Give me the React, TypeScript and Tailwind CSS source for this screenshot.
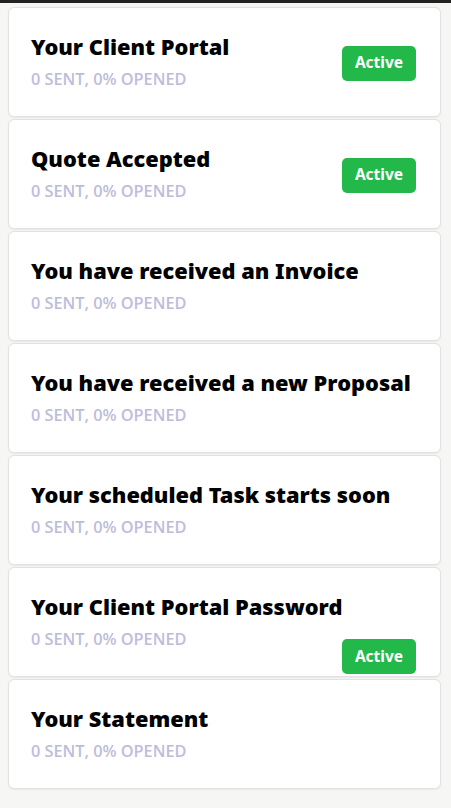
const items = [
  { title: "Your Client Portal", badge: "center" },
  { title: "Quote Accepted", badge: "center" },
  { title: "You have received an Invoice" },
  { title: "You have received a new Proposal" },
  { title: "Your scheduled Task starts soon" },
  { title: "Your Client Portal Password", badge: "end" },
  { title: "Your Statement" },
];

function Badge({ className }: { className?: string }) {
  return (
    <span
      className={`flex h-[35px] w-[74px] shrink-0 items-center justify-center rounded-[5px] bg-[#22b94a] text-[15.5px] font-bold text-white ${className ?? ""}`}
    >
      Active
    </span>
  );
}

export default function App() {
  return (
    <div
      className="min-h-[808px] border-t-[3px] border-[#222] bg-[#f6f6f4] pt-1"
      style={{ fontFamily: '"Noto Sans", "Open Sans", sans-serif' }}
    >
      <div className="ml-2 flex w-[433px] flex-col gap-[2px]">
        {items.map((item) => (
          <div
            key={item.title}
            className="flex h-[110px] items-center justify-between rounded-md border border-[#e2e2e2] bg-white pl-[22px] pr-[24px] shadow-[0_1px_2px_rgba(0,0,0,0.06)]"
          >
            <div className="mb-[3px] flex min-w-0 flex-col">
              <div className="whitespace-nowrap text-[21.8px] leading-[28px] font-black text-black">
                {item.title}
              </div>
              <div
                className="mt-[8px] whitespace-nowrap text-[16.3px] leading-[20px] font-semibold text-[#bdbddb]"
                style={{ fontFamily: '"Open Sans", sans-serif' }}
              >
                0 SENT, 0% OPENED
              </div>
            </div>
            {item.badge === "center" && <Badge className="mt-[2px]" />}
            {item.badge === "end" && <Badge className="mb-[2px] self-end" />}
          </div>
        ))}
      </div>
    </div>
  );
}
